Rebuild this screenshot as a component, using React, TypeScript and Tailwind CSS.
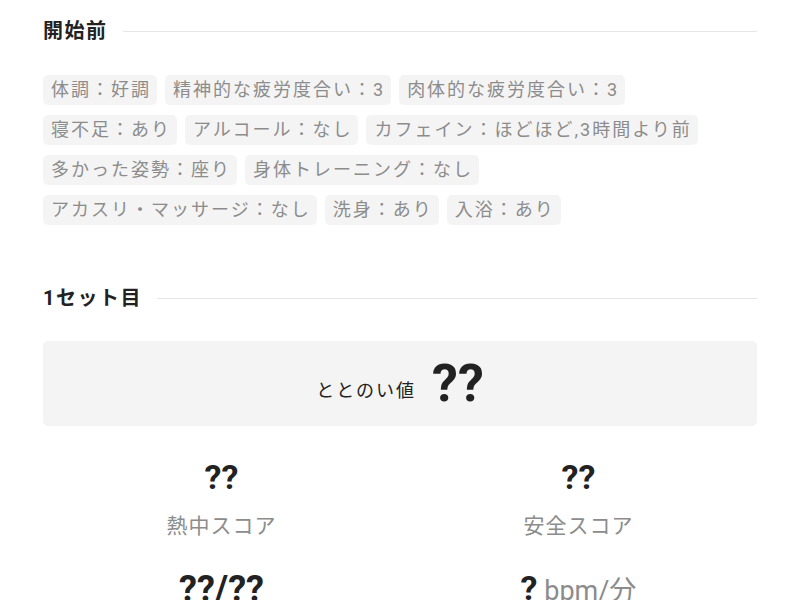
import React from "react";

const FONT = { fontFamily: "Roboto, 'Noto Sans CJK JP', sans-serif" };

const rows = [
  ["体調：好調", "精神的な疲労度合い：3", "肉体的な疲労度合い：3"],
  ["寝不足：あり", "アルコール：なし", "カフェイン：ほどほど,3時間より前"],
  ["多かった姿勢：座り", "身体トレーニング：なし"],
  ["アカスリ・マッサージ：なし", "洗身：あり", "入浴：あり"],
];

function Heading({ children }: { children: React.ReactNode }) {
  return (
    <div className="flex items-center gap-[15px] h-[24px]">
      <div className="text-[20px] font-bold text-[#222] tracking-[1.5px] leading-none">{children}</div>
      <div className="flex-1 h-px bg-[#e6e6e6]" />
    </div>
  );
}

export default function App() {
  return (
    <div className="w-[800px] h-[600px] overflow-hidden bg-white px-[43px] pt-[19px]" style={FONT}>
      <Heading>開始前</Heading>
      <div className="mt-[32px] flex flex-col gap-[10px]">
        {rows.map((r, i) => (
          <div key={i} className="flex gap-[8px]">
            {r.map((t) => (
              <div
                key={t}
                className="h-[30px] flex items-center pl-[8px] pr-[6px] rounded-[5px] bg-[#f4f4f4] text-[18px] text-[#8c8c8c] tracking-[2px] leading-none"
              >
                {t}
              </div>
            ))}
          </div>
        ))}
      </div>
      <div className="mt-[61px]">
        <Heading>1セット目</Heading>
      </div>
      <div className="mt-[31px] h-[85px] rounded-[5px] bg-[#f4f4f4] flex items-center justify-center gap-[16px]">
        <span className="text-[18px] text-[#222] tracking-[2px] mt-[14px]">ととのい値</span>
        <span className="text-[52px] font-bold text-[#222] leading-none">??</span>
      </div>
      <div className="grid grid-cols-2 mt-[34px]">
        <div className="flex flex-col items-center">
          <div className="text-[34px] font-bold text-[#222] leading-none">??</div>
          <div className="mt-[22px] text-[21px] text-[#8c8c8c] tracking-[1px] leading-none">熱中スコア</div>
        </div>
        <div className="flex flex-col items-center">
          <div className="text-[34px] font-bold text-[#222] leading-none">??</div>
          <div className="mt-[22px] text-[21px] text-[#8c8c8c] tracking-[1px] leading-none">安全スコア</div>
        </div>
        <div className="flex flex-col items-center mt-[34px]">
          <div className="text-[36px] font-bold text-[#222] leading-none">??/??</div>
        </div>
        <div className="flex flex-col items-center mt-[34px]">
          <div className="text-[34px] leading-none">
            <span className="font-bold text-[#222]">?</span>
            <span className="text-[27px] text-[#8c8c8c]"> bpm/分</span>
          </div>
        </div>
      </div>
    </div>
  );
}
